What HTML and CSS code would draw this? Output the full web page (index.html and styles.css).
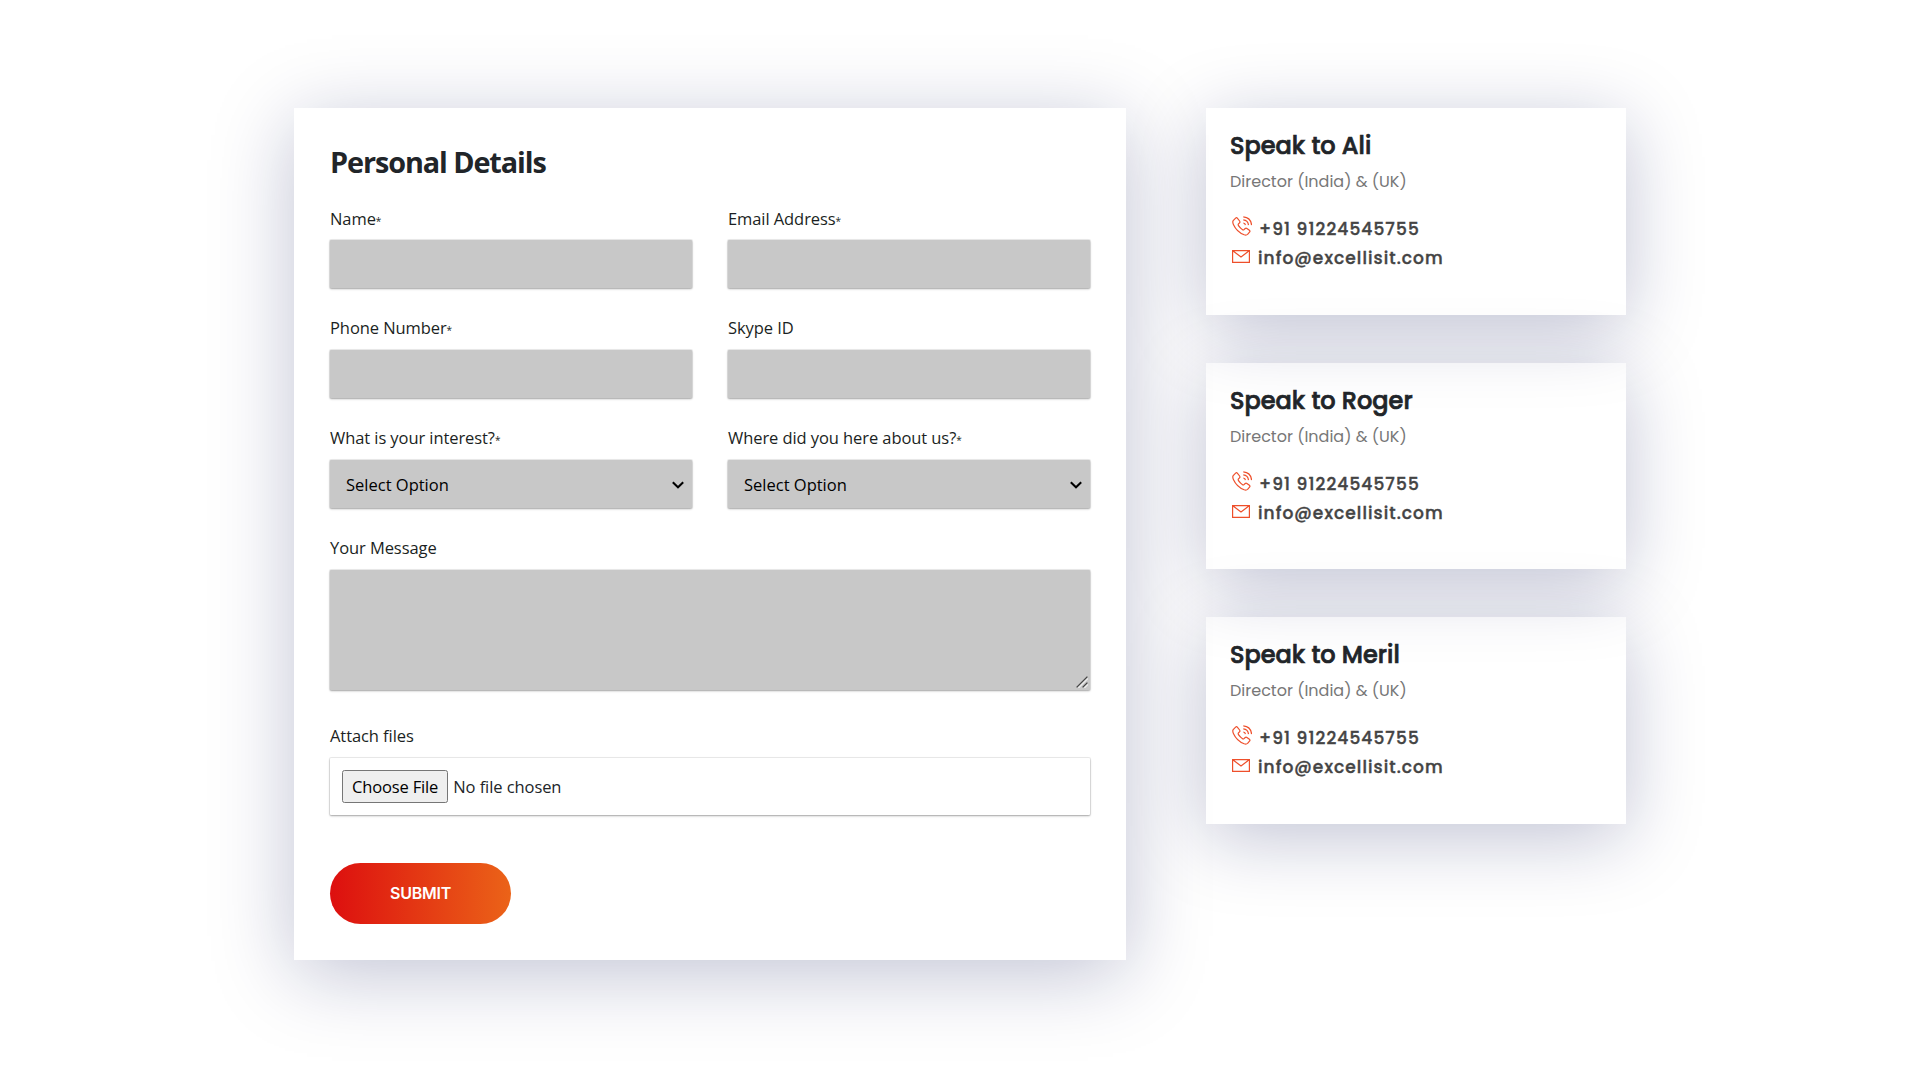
FILE: index.html
```html
<!DOCTYPE html>
<html lang="en">
<head>
<meta charset="utf-8">
<title>Contact</title>
<link rel="stylesheet" href="styles.css">
</head>
<body>
<svg class="sprite" aria-hidden="true">
  <symbol id="phone" viewBox="0 0 20 20">
    <path d="M1.2 4.6 L3.6 2.1 Q4.6 1.3 5.5 2.3 L7.6 5 Q8.3 6 7.5 6.9 L6.3 8.2 Q6 8.8 6.5 9.6 Q8.2 12.2 10.9 13.9 Q11.5 14.2 12 13.7 L13.2 12.5 Q14 11.8 14.9 12.4 L17.4 14.3 Q18.4 15.2 17.5 16.2 L15.6 18.4 Q14.4 19.5 12.2 18.8 Q4.7 15.7 1.4 8.4 Q.3 5.9 1.2 4.6Z"/>
    <path d="M11.3 7 Q13.2 7.2 13.4 9.1 M11.3 3.9 Q16 4.3 16.5 9.1 M11.3 .8 Q18.8 1.3 19.6 9.1"/>
  </symbol>
  <symbol id="mail" viewBox="0 0 18 13">
    <path d="M.6 .6H17.4V12.4H.6Z M.8 .8L9 7L17.2 .8"/>
  </symbol>
  <symbol id="chevron" viewBox="0 0 12 8">
    <path d="M.8 1.2L6 6.3L11.2 1.2"/>
  </symbol>
  <symbol id="grip" viewBox="0 0 12 12">
    <path class="grip-light" d="M2.4 12L12 2.4M8.4 12L12 8.4"/>
    <path class="grip-dark" d="M.6 11.4L11.4 .6M6.6 11.4L11.4 6.6"/>
  </symbol>
</svg>
<main class="page">
  <form class="panel form">
    <h1 class="title">Personal Details</h1>
    <div class="grid">
      <div class="field first"><label class="label" for="name">Name<small>*</small></label><input class="control" id="name" type="text"></div>
      <div class="field first"><label class="label" for="email">Email Address<small>*</small></label><input class="control" id="email" type="email"></div>
      <div class="field"><label class="label" for="tel">Phone Number<small>*</small></label><input class="control" id="tel" type="tel"></div>
      <div class="field"><label class="label" for="skype">Skype ID</label><input class="control" id="skype" type="text"></div>
      <div class="field"><label class="label" for="interest">What is your interest?<small>*</small></label><div class="wrap"><select class="control select" id="interest"><option>Select Option</option></select><svg class="chevron"><use href="#chevron"/></svg></div></div>
      <div class="field"><label class="label" for="source">Where did you here about us?<small>*</small></label><div class="wrap"><select class="control select" id="source"><option>Select Option</option></select><svg class="chevron"><use href="#chevron"/></svg></div></div>
      <div class="field wide"><label class="label" for="message">Your Message</label><div class="wrap"><textarea class="control area" id="message"></textarea><svg class="grip"><use href="#grip"/></svg></div></div>
    </div>
    <div class="field attach"><label class="label" for="file">Attach files</label><input class="control file" id="file" type="file"></div>
    <button class="submit" type="button">SUBMIT</button>
  </form>
  <aside class="contacts">
    <section class="panel card">
      <h2 class="card-title">Speak to Ali</h2>
      <p class="role">Director (India) &amp; (UK)</p>
      <p class="line phone"><svg class="icon-phone"><use href="#phone"/></svg><span>+91 91224545755</span></p>
      <p class="line mail"><svg class="icon-mail"><use href="#mail"/></svg><span>info@excellisit.com</span></p>
    </section>
    <section class="panel card">
      <h2 class="card-title">Speak to Roger</h2>
      <p class="role">Director (India) &amp; (UK)</p>
      <p class="line phone"><svg class="icon-phone"><use href="#phone"/></svg><span>+91 91224545755</span></p>
      <p class="line mail"><svg class="icon-mail"><use href="#mail"/></svg><span>info@excellisit.com</span></p>
    </section>
    <section class="panel card">
      <h2 class="card-title">Speak to Meril</h2>
      <p class="role">Director (India) &amp; (UK)</p>
      <p class="line phone"><svg class="icon-phone"><use href="#phone"/></svg><span>+91 91224545755</span></p>
      <p class="line mail"><svg class="icon-mail"><use href="#mail"/></svg><span>info@excellisit.com</span></p>
    </section>
  </aside>
</main>
</body>
</html>
```
FILE: styles.css
```css
* { box-sizing: border-box; }
body { margin: 0; background: #fff; color: #212529; font-family: "Segoe UI", "Open Sans", "Noto Sans", sans-serif; font-size: 16px; line-height: 24px; }
h1, h2, p { margin: 0; }
.sprite { display: none; }
.page { display: flex; align-items: flex-start; gap: 80px; min-height: 1080px; padding: 108px 294px 0; }
.panel { box-shadow: 0 14px 76px rgba(10, 18, 86, .255); }
.form { width: 832px; height: 852px; padding: 36px; }
.title { font-size: 28.8px; line-height: 36px; font-weight: 700; letter-spacing: -1.08px; margin-bottom: 27px; }
.grid { display: grid; grid-template-columns: 1fr 1fr; gap: 28px 36px; }
.wide { grid-column: 1 / -1; }
.field { display: flex; flex-direction: column; gap: 10px; }
.field.first { gap: 9px; }
.label { height: 24px; color: #1b1f23; font-size: 16.5px; font-weight: 480; letter-spacing: -.08px; white-space: nowrap; }
.label small { font-size: 10px; }
.wrap { position: relative; }
.control { display: block; width: 100%; height: 48px; margin: 0; padding: 0 12px; border: 0; border-radius: 1px; background: #c8c8c8; font: inherit; font-size: 16.5px; font-weight: 480; letter-spacing: -.08px; box-shadow: 0 0 0 1px rgba(0, 0, 0, .07), 0 1px 3px rgba(0, 0, 0, .12), 0 1px 2px rgba(0, 0, 0, .2); }
.select { appearance: none; color: #000; padding: 1px 16px 0; letter-spacing: 0; }
.chevron { position: absolute; right: 8px; top: 21px; width: 12px; height: 8px; fill: none; stroke: #000; stroke-width: 2; }
.area { height: 120px; resize: none; }
.grip { position: absolute; right: 2px; bottom: 2px; width: 12px; height: 12px; fill: none; }
.grip-light { stroke: #eee; stroke-width: 1.2; }
.grip-dark { stroke: #444; stroke-width: 1.3; }
.attach { margin-top: 34px; gap: 10px; }
.file { height: 57px; padding: 12px; background: #fff; color: #212529; }
.file::file-selector-button { height: 33px; padding: 1px 8px; margin-right: 5px; font: inherit; letter-spacing: -.15px; }
.submit { display: block; width: 181px; height: 61px; margin-top: 48px; padding: 0 0 1px; border: 0; border-radius: 31px; background: linear-gradient(90deg, #dd0f0f, #eb6318); color: #fff; font: 600 16px Inter, sans-serif; letter-spacing: -.25px; }
.contacts { display: flex; flex-direction: column; gap: 48px; width: 420px; font-family: Poppins, Inter, sans-serif; }
.card { height: 206.6px; padding: 22px 24px; }
.card-title { font-size: 24px; line-height: 32px; font-weight: 500; -webkit-text-stroke: .7px currentColor; }
.role { margin-top: 8px; color: #777; font-size: 16px; line-height: 24px; }
.line { display: flex; color: #444; font-size: 17px; line-height: 29px; font-weight: 500; letter-spacing: 1.08px; -webkit-text-stroke: .4px currentColor; }
.phone { margin-top: 21px; }
.icon-phone, .icon-mail { flex: none; fill: none; stroke: #ee4f2b; stroke-width: 1.2; }
.icon-phone { width: 20px; height: 20px; margin: 1px 7px 0 2px; }
.icon-mail { width: 18px; height: 13px; margin: 6px 8px 0 2px; }
```
